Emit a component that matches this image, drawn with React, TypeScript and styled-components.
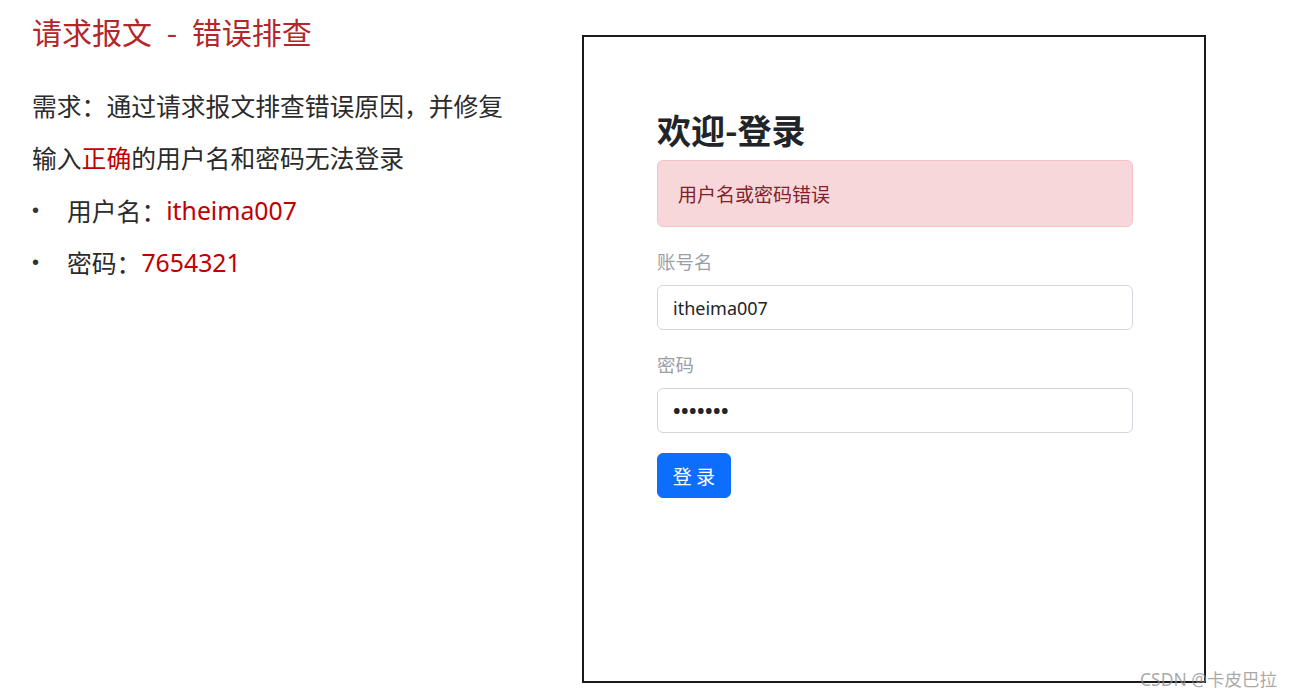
import React from "react";
import styled, { createGlobalStyle } from "styled-components";

const Global = createGlobalStyle`
  html, body { margin: 0; padding: 0; background: #fff; }
  body { font-family: "Noto Sans", "Noto Sans CJK SC", sans-serif; }
  #root { width: 1292px; height: 697px; position: relative; overflow: hidden; }
`;

const Page = styled.div`
  display: flex;
  align-items: flex-start;
  width: 1292px;
  height: 697px;
`;

const Left = styled.div`
  width: 550px;
  padding: 13px 0 0 32px;
  box-sizing: border-box;
  display: flex;
  flex-direction: column;
`;

const Title = styled.h1`
  margin: 0;
  font-family: "Noto Sans CJK SC", sans-serif;
  font-weight: 400;
  font-size: 30px;
  line-height: 36px;
  word-spacing: 8px;
  color: #b3262a;
`;

const Para = styled.p`
  margin: 0;
  font-family: "Noto Sans CJK SC", sans-serif;
  font-size: 24.8px;
  line-height: 52px;
  color: #2b2b2b;
  &:first-of-type { margin-top: 30px; }
`;

const Red = styled.span`
  color: #c00000;
  font-family: "Noto Sans", "Noto Sans CJK SC", sans-serif;
`;

const List = styled.ul`
  margin: 0;
  padding: 0;
  list-style: none;
`;

const Item = styled.li`
  display: flex;
  align-items: center;
  height: 52px;
  font-family: "Noto Sans CJK SC", sans-serif;
  font-size: 24.8px;
  color: #2b2b2b;
`;

const Bullet = styled.span`
  width: 35px;
  font-family: "Liberation Sans", sans-serif;
  font-size: 20px;
  color: #333;
`;

const Box = styled.div`
  margin: 35px 0 0 32px;
  width: 624px;
  height: 648px;
  box-sizing: border-box;
  border: 2px solid #1a1a1a;
  padding: 72px 0 0 73px;
`;

const Form = styled.div`
  width: 476px;
  display: flex;
  flex-direction: column;
  align-items: flex-start;
  font-family: "Noto Sans", "Noto Sans CJK SC", sans-serif;
`;

const Heading = styled.h2`
  margin: 0 0 10px;
  font-family: "Noto Sans CJK SC", sans-serif;
  font-size: 34px;
  line-height: 41px;
  font-weight: 700;
  color: #212529;
`;

const Alert = styled.div`
  box-sizing: border-box;
  width: 100%;
  height: 67px;
  display: flex;
  align-items: center;
  padding: 0 20px;
  background: #f8d7da;
  border: 1px solid #f5c2c7;
  border-radius: 6px;
  color: #842029;
  font-family: "Noto Sans CJK SC", sans-serif;
  font-size: 19px;
`;

const Label = styled.label`
  margin: 20px 0 10px;
  line-height: 28px;
  font-size: 18.5px;
  color: #9a9ea6;
  font-family: "Noto Sans CJK SC", sans-serif;
`;

const Input = styled.div<{ $dots?: boolean }>`
  box-sizing: border-box;
  width: 100%;
  height: 45px;
  display: flex;
  align-items: center;
  padding: 0 15px;
  border: 1px solid #d3d6dc;
  border-radius: 6px;
  font-size: ${(p) => (p.$dots ? "20px" : "18px")};
  font-weight: ${(p) => (p.$dots ? 700 : 400)};
  color: #212529;
  letter-spacing: ${(p) => (p.$dots ? "0.5px" : "0")};
`;

const Button = styled.button`
  margin-top: 20px;
  width: 74px;
  height: 45px;
  border: 1px solid #0d6efd;
  border-radius: 6px;
  background: #0d6efd;
  color: #fff;
  font-family: "Noto Sans CJK SC", sans-serif;
  font-size: 19px;
  padding: 0;
`;

const Watermark = styled.div`
  position: absolute;
  right: 15px;
  top: 667px;
  font-family: "Noto Sans", "Noto Sans CJK SC", sans-serif;
  font-size: 17.5px;
  line-height: 24px;
  color: rgba(140, 140, 140, 0.75);
`;

export default function App() {
  return (
    <>
      <Global />
      <Page>
        <Left>
          <Title>请求报文 - 错误排查</Title>
          <Para>需求：通过请求报文排查错误原因，并修复</Para>
          <Para>
            输入<Red>正确</Red>的用户名和密码无法登录
          </Para>
          <List>
            <Item>
              <Bullet>•</Bullet>用户名：<Red>itheima007</Red>
            </Item>
            <Item>
              <Bullet>•</Bullet>密码：<Red>7654321</Red>
            </Item>
          </List>
        </Left>
        <Box>
          <Form>
            <Heading>欢迎-登录</Heading>
            <Alert>用户名或密码错误</Alert>
            <Label>账号名</Label>
            <Input>itheima007</Input>
            <Label>密码</Label>
            <Input $dots>•••••••</Input>
            <Button>登 录</Button>
          </Form>
        </Box>
      </Page>
      <Watermark>CSDN @卡皮巴拉</Watermark>
    </>
  );
}
